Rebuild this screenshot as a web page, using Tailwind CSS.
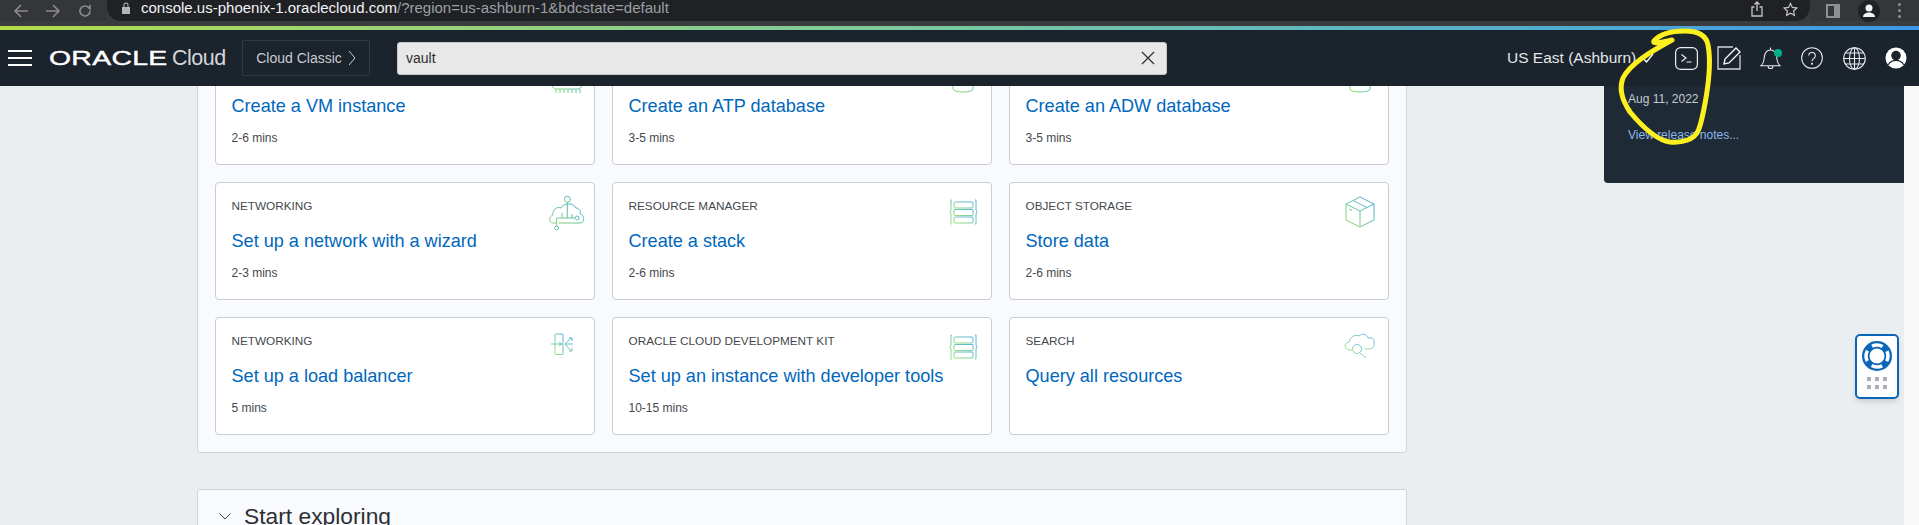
<!DOCTYPE html>
<html lang="en">
<head>
    <meta charset="UTF-8">
    <meta name="viewport" content="width=device-width, initial-scale=1.0">
    <title>Oracle Cloud Console</title>
    <script src="https://cdn.jsdelivr.net/npm/@tailwindcss/browser@4"></script>
</head>
<body class="relative h-[525px] overflow-hidden bg-[#ebeef1] font-['Liberation_Sans',Arial,sans-serif]">
    <!-- Shared icon gradient -->
    <svg class="absolute w-0 h-0">
        <defs>
            <linearGradient id="ico" x1="1" y1="0" x2="0" y2="1">
                <stop offset="0" stop-color="#3fa9e0"/>
                <stop offset="1" stop-color="#8fdc6a"/>
            </linearGradient>
        </defs>
    </svg>

    <!-- Browser toolbar -->
    <div class="h-[26px] bg-[#3a3b3f] flex items-start">
        <div class="w-[107px] h-[21px] bg-[#35363a] flex items-center pl-[13px] gap-[16px] text-[#8a8b8e]">
            <svg class="w-[16px] h-[16px]" viewBox="0 0 16 16" fill="none" stroke="currentColor" stroke-width="1.6"><path d="M15 8H2M8 2 2 8l6 6"/></svg>
            <svg class="w-[16px] h-[16px]" viewBox="0 0 16 16" fill="none" stroke="currentColor" stroke-width="1.6"><path d="M1 8h13M8 2l6 6-6 6"/></svg>
            <svg class="w-[16px] h-[16px]" viewBox="0 0 16 16" fill="none" stroke="currentColor" stroke-width="1.6"><path d="M13 8a5 5 0 1 1-1.500-3.600L13 6V2"/></svg>
        </div>
        <div class="w-[1703px] h-[21px] bg-[#202124] rounded-br-[14px] rounded-bl-[14px] flex items-start pl-[14px] pr-[12px]">
            <svg class="mt-[2px] w-[10px] h-[12px] mr-[10px]" viewBox="0 0 10 12" fill="#b4b5b8"><path d="M1 5h8v7H1zM2.500 5V3a2.500 2.500 0 0 1 5 0v2H6.500V3a1.500 1.500 0 0 0-3 0v2z"/></svg>
            <span class="text-[15px] leading-[16px] text-[#f1f3f4]">console.us-phoenix-1.oraclecloud.com<span class="text-[#9aa0a6]">/?region=us-ashburn-1&amp;bdcstate=default</span></span>
            <div class="ml-auto mt-[1px] flex items-center gap-[20px] text-[#c4c5c8]">
                <svg class="w-[12px] h-[16px]" viewBox="0 0 12 16" fill="none" stroke="currentColor" stroke-width="1.3"><path d="M3.500 6H1v9h10V6H8.500M6 10V1M3.500 3.500 6 1l2.500 2.500"/></svg>
                <svg class="w-[15px] h-[15px]" viewBox="0 0 16 16" fill="none" stroke="currentColor" stroke-width="1.3"><path d="m8 1.500 2 4.300 4.700.6-3.400 3.200.9 4.700L8 12l-4.200 2.300.9-4.700L1.300 6.400 6 5.800z"/></svg>
            </div>
        </div>
        <div class="flex-1 h-[21px] bg-[#35363a] flex items-center pl-[16px] gap-[18px]">
            <svg class="w-[14px] h-[14px]" viewBox="0 0 14 14"><path fill="#8f9093" d="M0 0h14v14H0z"/><path fill="#35363a" d="M2 2h6v10H2z"/></svg>
            <div class="w-[22px] h-[22px] rounded-full bg-[#202124] flex items-center justify-center">
                <svg class="w-[14px] h-[14px]" viewBox="0 0 14 14" fill="#f1f3f4"><circle cx="7" cy="4" r="3.500"/><path d="M1 13c0-3 3-4.500 6-4.500s6 1.500 6 4.500z"/></svg>
            </div>
            <div class="flex flex-col gap-[3px]">
                <span class="w-[3px] h-[3px] rounded-full bg-[#8f9093]"></span>
                <span class="w-[3px] h-[3px] rounded-full bg-[#8f9093]"></span>
                <span class="w-[3px] h-[3px] rounded-full bg-[#8f9093]"></span>
            </div>
        </div>
    </div>
    <div class="h-[4px] bg-gradient-to-r from-[#b2dd48] via-[#78c8a0] to-[#3c98e8]"></div>

    <!-- Console header -->
    <header class="relative h-[56px] bg-[#1b232d] flex items-center text-white">
        <svg class="ml-[8px] w-[24px] h-[16px]" viewBox="0 0 24 16" stroke="#fff" stroke-width="2"><path d="M0 1h24M0 8h24M0 15h24"/></svg>
        <span class="ml-[17px] w-[115px] inline-block origin-left scale-x-[1.42] text-[20px] tracking-[0.2px] leading-[24px] [-webkit-text-stroke:0.4px_white]">ORACLE</span>
        <span class="ml-[8px] w-[54px] text-[21.500px] font-light text-[#d4d6d9] tracking-[-0.5px]">Cloud</span>
        <div class="ml-[16px] w-[128px] h-[36px] border border-[#2f3a47] rounded-[2px] flex items-center justify-center gap-[6px] text-[14px] text-[#c9ccd0]">
            Cloud Classic
            <svg class="w-[8px] h-[16px]" viewBox="0 0 8 16" fill="none" stroke="currentColor"><path d="m1 1 6 7-6 7"/></svg>
        </div>
        <div class="ml-[27px] w-[770px] h-[33px] bg-[#e8e8e8] border border-[#c4c8cc] rounded-[3px] flex items-center justify-between pl-[8px] pr-[11px] text-[14px] text-[#2e2e2e]">
            vault
            <svg class="w-[14px] h-[14px]" viewBox="0 0 14 14" stroke="#333" stroke-width="1.300"><path d="m1 1 12 12M13 1 1 13"/></svg>
        </div>
        <span class="ml-[340px] w-[135px] text-[15.500px] text-[#e4e6e8] whitespace-nowrap">US East (Ashburn)</span>
        <svg class="w-[12px] h-[10px]" viewBox="0 0 12 10" fill="none" stroke="#eceef0" stroke-width="1.500"><path d="m1 5 3.500 4L11 1"/></svg>
        <svg class="ml-[21px] w-[23px] h-[23px]" viewBox="0 0 23 23" fill="none" stroke="#eceef0" stroke-width="1.200"><rect x=".6" y=".6" width="21.800" height="21.800" rx="5"/><path d="m6.500 7.500 4.500 3.500-4.500 3.500M11.500 15H16.500"/></svg>
        <svg class="ml-[19px] w-[24px] h-[24px]" viewBox="0 0 24 24" fill="none" stroke="#d4d6d9" stroke-width="1.300"><path d="M16 1H1v22h22V9"/><path stroke="#fff" d="M7 18l1-5L19 2l4 4-11 11z"/></svg>
        <div class="relative ml-[19px] w-[21px] h-[25px]">
            <svg class="w-[21px] h-[25px]" viewBox="0 0 22 25" fill="none" stroke="#e8eaec" stroke-width="1.100"><path d="M1 20c3-2 3-5 3.500-9C5 6 7 3.500 11 3.500S17 6 17.500 11c.5 4 .5 7 3.500 9zM11 1v2.500M8.500 20.500a2.500 2.500 0 0 0 5 0"/></svg>
            <span class="absolute top-[3px] right-[-1px] w-[8px] h-[8px] rounded-full bg-[#00b08c]"></span>
        </div>
        <svg class="ml-[20px] w-[22px] h-[22px]" viewBox="0 0 23 23" fill="none" stroke="#e8eaec" stroke-width="1.100"><circle cx="11.500" cy="11.500" r="10.800"/><path d="M8 9a3.500 3.500 0 1 1 5.400 3c-1.300.8-1.900 1.300-1.900 3"/><circle cx="11.500" cy="17.500" r=".6"/></svg>
        <svg class="ml-[20px] w-[23px] h-[23px]" viewBox="0 0 23 23" fill="none" stroke="#e8eaec" stroke-width="1.100"><circle cx="11.500" cy="11.500" r="10.800"/><ellipse cx="11.500" cy="11.500" rx="5" ry="10.800"/><path d="M11.500.7v21.600M.7 11.500h21.600M2.500 6h18M2.500 17h18"/></svg>
        <svg class="ml-[19px] w-[22px] h-[22px]" viewBox="0 0 23 23"><circle cx="11.500" cy="11.500" r="11" fill="#fff"/><circle cx="11.500" cy="9" r="5" fill="#1b232d"/><path d="M3.500 18.500c2-3.500 5-4.500 8-4.500s6 1 8 4.500" fill="none" stroke="#1b232d" stroke-width="1.200"/></svg>
    </header>

    <!-- Scrolled page content -->
    <main class="relative h-[439px] overflow-hidden flex">
        <div class="w-[1904px] -mt-[40px] pl-[197px]">
            <section class="w-[1210px] bg-[#f9fafe] border border-[#d0d4d9] rounded-[3px] pl-[17px] pb-[17px] pr-[17px]">
                <div class="grid grid-cols-[380px_380px_380px] gap-[17px]">

                    <!-- First row sits partly behind the header, its labels are scrolled away -->
                    <div class="h-[118px] bg-white border border-[#c8ccd4] rounded-[4px] flex justify-between pl-[15.500px]">
                        <div class="pt-[31px]">
                            <h3 class="mt-[15px] text-[18.100px] leading-[24px] text-[#0067bd]">Create a VM instance</h3>
                            <p class="mt-[12px] text-[12px] leading-[16px] text-[#44484d]">2-6 mins</p>
                        </div>
                        <svg class="mt-[12px] mr-[9px] w-[36px] h-[36px]" viewBox="0 0 36 36" fill="none" stroke="url(#ico)"><path d="M3 5h30v21l-3 3H6l-3-3zM7 29v4M11 29v4M15 29v4M19 29v4M23 29v4M27 29v4M31 29v4"/></svg>
                    </div>
                    <div class="h-[118px] bg-white border border-[#c8ccd4] rounded-[4px] flex justify-between pl-[15.500px]">
                        <div class="pt-[31px]">
                            <h3 class="mt-[15px] text-[18.100px] leading-[24px] text-[#0067bd]">Create an ATP database</h3>
                            <p class="mt-[12px] text-[12px] leading-[16px] text-[#44484d]">3-5 mins</p>
                        </div>
                        <svg class="mt-[12px] mr-[9px] w-[36px] h-[36px]" viewBox="0 0 36 36" fill="none" stroke="url(#ico)"><path d="M7 6v23c0 4 20 4 20 0V6"/></svg>
                    </div>
                    <div class="h-[118px] bg-white border border-[#c8ccd4] rounded-[4px] flex justify-between pl-[15.500px]">
                        <div class="pt-[31px]">
                            <h3 class="mt-[15px] text-[18.100px] leading-[24px] text-[#0067bd]">Create an ADW database</h3>
                            <p class="mt-[12px] text-[12px] leading-[16px] text-[#44484d]">3-5 mins</p>
                        </div>
                        <svg class="mt-[12px] mr-[9px] w-[36px] h-[36px]" viewBox="0 0 36 36" fill="none" stroke="url(#ico)"><path d="M7 6v23c0 4 20 4 20 0V6"/></svg>
                    </div>

                    <div class="h-[118px] bg-white border border-[#c8ccd4] rounded-[4px] flex justify-between pl-[15.500px]">
                        <div>
                            <p class="pt-[15px] text-[11.750px] leading-[16px] text-[#44484d]">NETWORKING</p>
                            <h3 class="mt-[15px] text-[18.100px] leading-[24px] text-[#0067bd]">Set up a network with a wizard</h3>
                            <p class="mt-[12px] text-[12px] leading-[16px] text-[#44484d]">2-3 mins</p>
                        </div>
                        <svg class="mt-[12px] mr-[9px] w-[36px] h-[36px]" viewBox="0 0 36 36" fill="none" stroke="url(#ico)"><circle cx="18.300" cy="4.300" r="3"/><circle cx="28" cy="23" r="2"/><circle cx="7.500" cy="33" r="2"/><path d="M18.300 7.300V23M7.500 31v-8H26M13 23v-5M23 23v-4M7.500 28H4c-4.500 0-4.500-7 0-8-1-5 4-9 8-7 2-5 12-6 15 0 4 0 5 4 4 6 5 1 5 9 0 9H10"/></svg>
                    </div>
                    <div class="h-[118px] bg-white border border-[#c8ccd4] rounded-[4px] flex justify-between pl-[15.500px]">
                        <div>
                            <p class="pt-[15px] text-[11.750px] leading-[16px] text-[#44484d]">RESOURCE MANAGER</p>
                            <h3 class="mt-[15px] text-[18.100px] leading-[24px] text-[#0067bd]">Create a stack</h3>
                            <p class="mt-[12px] text-[12px] leading-[16px] text-[#44484d]">2-6 mins</p>
                        </div>
                        <svg class="mt-[12px] mr-[9px] w-[36px] h-[36px]" viewBox="0 0 36 36" fill="none" stroke="url(#ico)" stroke-width=".9"><rect x="8" y="7" width="19" height="6" rx="1"/><rect x="8" y="14.500" width="19" height="6" rx="1"/><rect x="8" y="22" width="19" height="6" rx="1"/><path d="M6 5H5v10l-1 2 1 2v10h1M29 5h1v10l1 2-1 2v10h-1"/></svg>
                    </div>
                    <div class="h-[118px] bg-white border border-[#c8ccd4] rounded-[4px] flex justify-between pl-[15.500px]">
                        <div>
                            <p class="pt-[15px] text-[11.750px] leading-[16px] text-[#44484d]">OBJECT STORAGE</p>
                            <h3 class="mt-[15px] text-[18.100px] leading-[24px] text-[#0067bd]">Store data</h3>
                            <p class="mt-[12px] text-[12px] leading-[16px] text-[#44484d]">2-6 mins</p>
                        </div>
                        <svg class="mt-[12px] mr-[9px] w-[36px] h-[36px]" viewBox="0 0 36 36" fill="none" stroke="url(#ico)"><path d="M17 2 31 9v16l-14 7-14-7V9zM3 9l14 7 14-7M17 16v16M10 5.500l14 7M6 14l3 1.500"/></svg>
                    </div>

                    <div class="h-[118px] bg-white border border-[#c8ccd4] rounded-[4px] flex justify-between pl-[15.500px]">
                        <div>
                            <p class="pt-[15px] text-[11.750px] leading-[16px] text-[#44484d]">NETWORKING</p>
                            <h3 class="mt-[15px] text-[18.100px] leading-[24px] text-[#0067bd]">Set up a load balancer</h3>
                            <p class="mt-[12px] text-[12px] leading-[16px] text-[#44484d]">5 mins</p>
                        </div>
                        <svg class="mt-[12px] mr-[9px] w-[36px] h-[36px]" viewBox="0 0 36 36" fill="none" stroke="url(#ico)" stroke-width=".9"><rect x="6" y="4" width="8" height="20.500" rx="1"/><path d="M2 14h11M10 12l3 2-3 2M16 14h8M16 14l6-6M16 14l6 7M20 8h3v3M20 21h3v-3"/></svg>
                    </div>
                    <div class="h-[118px] bg-white border border-[#c8ccd4] rounded-[4px] flex justify-between pl-[15.500px]">
                        <div>
                            <p class="pt-[15px] text-[11.750px] leading-[16px] text-[#44484d]">ORACLE CLOUD DEVELOPMENT KIT</p>
                            <h3 class="mt-[15px] text-[18.100px] leading-[24px] text-[#0067bd]">Set up an instance with developer tools</h3>
                            <p class="mt-[12px] text-[12px] leading-[16px] text-[#44484d]">10-15 mins</p>
                        </div>
                        <svg class="mt-[12px] mr-[9px] w-[36px] h-[36px]" viewBox="0 0 36 36" fill="none" stroke="url(#ico)" stroke-width=".9"><rect x="8" y="7" width="19" height="6" rx="1"/><rect x="8" y="14.500" width="19" height="6" rx="1"/><rect x="8" y="22" width="19" height="6" rx="1"/><path d="M6 5H5v10l-1 2 1 2v10h1M29 5h1v10l1 2-1 2v10h-1"/></svg>
                    </div>
                    <div class="h-[118px] bg-white border border-[#c8ccd4] rounded-[4px] flex justify-between pl-[15.500px]">
                        <div>
                            <p class="pt-[15px] text-[11.750px] leading-[16px] text-[#44484d]">SEARCH</p>
                            <h3 class="mt-[15px] text-[18.100px] leading-[24px] text-[#0067bd]">Query all resources</h3>
                        </div>
                        <svg class="mt-[12px] mr-[9px] w-[36px] h-[36px]" viewBox="0 0 36 36" fill="none" stroke="url(#ico)" stroke-width=".8"><path d="M9 20H7c-6 0-7-7-1-8 1-5 6-8 10-6 3-3 8-2 9 2 5-1 7 2 6 5 1 4-2 6-6 6h-3"/><circle cx="14" cy="19" r="4.500"/><path d="m17 23 6 5"/></svg>
                    </div>
                </div>
            </section>

            <section class="mt-[36px] w-[1210px] h-[60px] bg-[#f9fafe] border border-[#d0d4d9] rounded-[3px] flex items-start pt-[12px] pl-[21px] gap-[13px]">
                <svg class="mt-[11px] w-[12px] h-[7px]" viewBox="0 0 12 7" fill="none" stroke="#3c3f44"><path d="m.5.5 5.500 5.500L11.500.5"/></svg>
                <h2 class="text-[22.800px] leading-[28px] text-[#2d2f33]">Start exploring</h2>
            </section>
        </div>
        <div class="w-[15px] bg-[#f8f8f8]"></div>

        <!-- Release notes flyout, open over the page -->
        <aside class="absolute top-0 left-[1604px] w-[300px] h-[97px] bg-[#1f2a37] rounded-bl-[4px] pl-[24px] pt-[5px]">
            <p class="text-[12px] leading-[16px] text-[#c6cace]">Aug 11, 2022</p>
            <p class="mt-[20px] text-[12px] leading-[16px] text-[#8db8e8]">View release notes...</p>
        </aside>

        <!-- Help widget -->
        <div class="absolute left-[1855px] top-[248px] w-[44px] h-[65px] bg-white border-[2px] border-[#0a66b8] rounded-[5px] shadow-md flex flex-col items-center pt-[5px]">
            <svg class="w-[30px] h-[30px]" viewBox="0 0 30 30"><circle cx="15" cy="15" r="15" fill="#0a66b8"/><circle cx="15" cy="15" r="11" fill="none" stroke="#fff" stroke-width="3.500" stroke-dasharray="11 6.280" stroke-dashoffset="5.500"/><circle cx="15" cy="15" r="7.500" fill="#fff"/></svg>
            <div class="mt-[6px] grid grid-cols-3 gap-[4px]">
                <span class="w-[4px] h-[4px] bg-[#aab0b6]"></span>
                <span class="w-[4px] h-[4px] bg-[#aab0b6]"></span>
                <span class="w-[4px] h-[4px] bg-[#aab0b6]"></span>
                <span class="w-[4px] h-[4px] bg-[#aab0b6]"></span>
                <span class="w-[4px] h-[4px] bg-[#aab0b6]"></span>
                <span class="w-[4px] h-[4px] bg-[#aab0b6]"></span>
            </div>
        </div>
    </main>

    <!-- Hand drawn yellow highlight on the screenshot -->
    <svg class="absolute left-0 top-0 w-[1919px] h-[525px] pointer-events-none" viewBox="0 0 1919 525" fill="none" stroke="#fdf01f" stroke-width="5" stroke-linecap="round" stroke-linejoin="round">
        <path d="M1672 40C1660 43 1652 44 1654 41C1660 34 1672 31 1685 31C1697 31 1706 34 1708 45C1711 60 1709 80 1706 98C1703 115 1701 125 1698 131C1694 140 1682 143 1670 142C1655 140 1640 124 1630 112C1622 100 1619 88 1623 78C1630 64 1650 52 1672 40"/>
    </svg>
</body>
</html>
